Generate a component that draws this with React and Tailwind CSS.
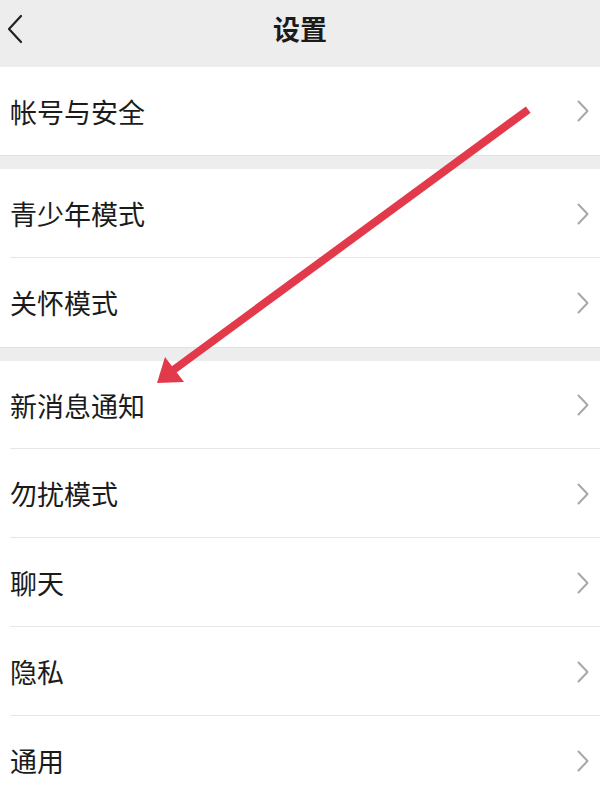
import React from "react";

const Chevron = () => (
  <svg width="14" height="22" viewBox="0 0 14 22" className="shrink-0">
    <path d="M2.5 1.5 L11.5 11 L2.5 20.5" fill="none" stroke="#a8a8a8" strokeWidth="2" strokeLinecap="round" strokeLinejoin="round" />
  </svg>
);

const Row = ({ label, h = "h-[89px]", divider = true }) => (
  <div className={`relative flex items-center justify-between bg-white pl-[10px] pr-[10px] ${h}`}>
    <span className="text-[27px] leading-none text-[#1b1b1b]">{label}</span>
    <Chevron />
    {divider && <div className="absolute bottom-0 left-[10px] right-0 h-px bg-[#e6e6e6]" />}
  </div>
);

const Band = () => <div className="h-[14px] bg-[#ededed] border-t border-[#e2e2e2]" />;

export default function App() {
  return (
    <div
      className="relative w-[600px] h-[794px] overflow-hidden bg-[#ededed]"
      style={{ fontFamily: '"Noto Sans CJK SC", "Noto Sans", sans-serif' }}
    >
      <div className="relative flex items-center justify-center h-[67px] pb-[10px] bg-[#ededed]">
        <svg width="18" height="30" viewBox="0 0 18 30" className="absolute left-[6px] top-[14px]">
          <path d="M15 2 L3 15 L15 28" fill="none" stroke="#222" strokeWidth="2.2" strokeLinecap="round" strokeLinejoin="round" />
        </svg>
        <span className="text-[27px] font-bold leading-none text-[#1b1b1b]">设置</span>
      </div>
      <Row label="帐号与安全" h="h-[88px]" divider={false} />
      <Band />
      <Row label="青少年模式" />
      <Row label="关怀模式" divider={false} />
      <Band />
      <Row label="新消息通知" h="h-[88px]" />
      <Row label="勿扰模式" />
      <Row label="聊天" />
      <Row label="隐私" />
      <Row label="通用" divider={false} />

      <svg className="absolute left-0 top-0 pointer-events-none" width="600" height="794" viewBox="0 0 600 794">
        <line x1="525" y1="112" x2="172" y2="371" stroke="#e23a4b" strokeWidth="8" strokeLinecap="square" />
        <polygon points="157,383 165,357 184,382" fill="#e23a4b" />
      </svg>
    </div>
  );
}
